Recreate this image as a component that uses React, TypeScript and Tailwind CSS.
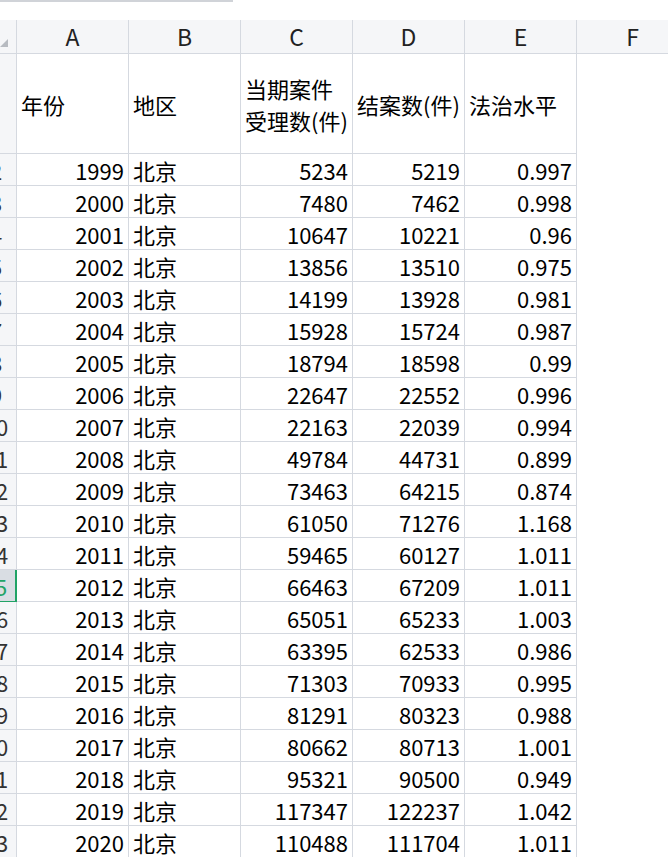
const rows: [number, number, number, string][] = [
  [1999, 5234, 5219, '0.997'], [2000, 7480, 7462, '0.998'], [2001, 10647, 10221, '0.96'],
  [2002, 13856, 13510, '0.975'], [2003, 14199, 13928, '0.981'], [2004, 15928, 15724, '0.987'],
  [2005, 18794, 18598, '0.99'], [2006, 22647, 22552, '0.996'], [2007, 22163, 22039, '0.994'],
  [2008, 49784, 44731, '0.899'], [2009, 73463, 64215, '0.874'], [2010, 61050, 71276, '1.168'],
  [2011, 59465, 60127, '1.011'], [2012, 66463, 67209, '1.011'], [2013, 65051, 65233, '1.003'],
  [2014, 63395, 62533, '0.986'], [2015, 71303, 70933, '0.995'], [2016, 81291, 80323, '0.988'],
  [2017, 80662, 80713, '1.001'], [2018, 95321, 90500, '0.949'], [2019, 117347, 122237, '1.042'],
  [2020, 110488, 111704, '1.011'],
];

const cell = 'w-[112px] shrink-0 border-r border-b border-[#d5d9e0] px-1 flex items-center';

function RowNum({ n, active }: { n: number; active?: boolean }) {
  return (
    <div className={`w-[17px] shrink-0 overflow-hidden border-b border-r flex justify-end ${active ? 'bg-[#d9dde3] border-r-[#21a366] border-r-2 text-[#21a366]' : 'bg-[#f5f6f8] border-[#d5d9e0] text-[#333]'}`}>
      <div className="w-[40px] shrink-0 text-center flex items-center justify-center">{n}</div>
    </div>
  );
}

export default function App() {
  return (
    <div className="w-[668px] h-[857px] overflow-hidden bg-white text-[22px] text-black" style={{ fontFamily: '"Noto Sans CJK SC", "Liberation Sans", sans-serif' }}>
      <div className="h-[20px] flex">
        <div className="w-[233px] h-[2px] bg-[#d0d3d8]" />
      </div>
      <div className="flex h-[34px] bg-[#f5f6f8] leading-none text-[23px]">
        <div className="w-[17px] shrink-0 border-r border-b border-[#d5d9e0] relative">
          <div className="absolute bottom-[6px] left-0 w-0 h-0 border-l-[8px] border-l-transparent border-b-[8px] border-b-[#b7bbc1]" />
        </div>
        {['A', 'B', 'C', 'D', 'E', 'F'].map((c) => (
          <div key={c} className="w-[112px] shrink-0 border-r border-b border-[#d5d9e0] flex items-center justify-center text-[#222]">{c}</div>
        ))}
      </div>
      <div className="flex h-[100px] leading-[32px]">
        <div className="w-[17px] shrink-0 bg-[#f5f6f8] border-r border-b border-[#d5d9e0]" />
        <div className={cell}>年份</div>
        <div className={cell}>地区</div>
        <div className={cell}>当期案件受理数(件)</div>
        <div className={cell}>结案数(件)</div>
        <div className={cell}>法治水平</div>
        <div className="w-[112px] shrink-0" />
      </div>
      {rows.map(([y, a, b, e], i) => (
        <div key={y} className="flex h-[32px] leading-none">
          <RowNum n={i + 2} active={y === 2012} />
          <div className={`${cell} justify-end`}>{y}</div>
          <div className={cell}>北京</div>
          <div className={`${cell} justify-end`}>{a}</div>
          <div className={`${cell} justify-end`}>{b}</div>
          <div className={`${cell} justify-end`}>{e}</div>
          <div className="w-[112px] shrink-0" />
        </div>
      ))}
    </div>
  );
}
